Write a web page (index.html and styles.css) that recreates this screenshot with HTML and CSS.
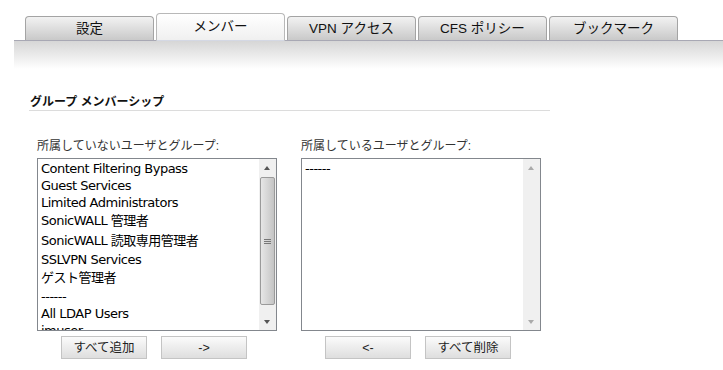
FILE: index.html
```html
<!DOCTYPE html>
<html lang="ja">
<head>
<meta charset="utf-8">
<link rel="stylesheet" href="styles.css">
</head>
<body>
<div class="tabs">
  <div class="tab">設定</div>
  <div class="tab active">メンバー</div>
  <div class="tab">VPN アクセス</div>
  <div class="tab">CFS ポリシー</div>
  <div class="tab">ブックマーク</div>
</div>
<div class="band"></div>
<div class="content">
  <h2 class="heading">グループ メンバーシップ</h2>
  <div class="columns">
    <div class="col">
      <div class="label">所属していないユーザとグループ:</div>
      <div class="list">
        <div class="items">
          <div class="opt">Content Filtering Bypass</div>
          <div class="opt">Guest Services</div>
          <div class="opt">Limited Administrators</div>
          <div class="opt cjk">SonicWALL 管理者</div>
          <div class="opt cjk">SonicWALL 読取専用管理者</div>
          <div class="opt">SSLVPN Services</div>
          <div class="opt cjk">ゲスト管理者</div>
          <div class="opt">------</div>
          <div class="opt">All LDAP Users</div>
          <div class="opt">imuser</div>
        </div>
        <div class="sb">
          <div class="arrow up"></div>
          <div class="track"><div class="thumb"><span class="grip"></span></div></div>
          <div class="arrow down"></div>
        </div>
      </div>
      <div class="btns">
        <button class="btn">すべて追加</button>
        <button class="btn">-&gt;</button>
      </div>
    </div>
    <div class="col">
      <div class="label">所属しているユーザとグループ:</div>
      <div class="list">
        <div class="items">
          <div class="opt">------</div>
        </div>
        <div class="sb disabled">
          <div class="arrow up"></div>
          <div class="track"></div>
          <div class="arrow down"></div>
        </div>
      </div>
      <div class="btns">
        <button class="btn">&lt;-</button>
        <button class="btn">すべて削除</button>
      </div>
    </div>
  </div>
</div>
</body>
</html>
```
FILE: styles.css
```css
body {
  margin: 0;
  background: #fff;
  font-family: "Liberation Sans", "Noto Sans CJK JP", sans-serif;
  color: #222;
}
.tabs {
  display: flex;
  align-items: flex-end;
  gap: 2px;
  margin-left: 14px;
  padding: 12px 0 0 11px;
  height: 28px;
  box-sizing: content-box;
}
.tab {
  width: 127px;
  height: 23px;
  border: 1px solid #a4a4a4;
  border-bottom: none;
  border-radius: 4px 4px 0 0;
  background: linear-gradient(#f2f2f2, #c9c9c9);
  font-size: 13.5px;
  line-height: 23px;
  text-align: center;
  color: #111;
}
.tab.active {
  line-height: 25px;
  background: linear-gradient(#ffffff, #f0f0f0);
  border-color: #b8b8b8;
  border-bottom: 1px solid #d4d8e4;
  box-sizing: border-box;
  width: 129px;
  height: 28px;
  margin-bottom: -1px;
  position: relative;
}
.band {
  margin-left: 14px;
  height: 28px;
  border-top: 1px solid #a8a8b4;
  background: linear-gradient(#d6d6d6, #ffffff);
}
.content {
  padding-left: 29px;
}
.heading {
  margin: 26px 0 0 0;
  width: 520px;
  font-size: 12px;
  font-weight: bold;
  line-height: 14px;
  padding: 0 0 1px 1px;
  border-bottom: 1px solid #dcdcdc;
  color: #111;
}
.columns {
  display: flex;
  gap: 24px;
  padding: 28px 0 0 8px;
}
.col {
  width: 240px;
  display: flex;
  flex-direction: column;
}
.label {
  font-size: 12px;
  line-height: 14px;
  color: #333;
  margin-bottom: 5px;
}
.list {
  display: flex;
  height: 173px;
  box-sizing: border-box;
  border: 1px solid #83878d;
  background: #fff;
  overflow: hidden;
}
.items {
  flex: 1;
  padding: 1px 0 0 3px;
  overflow: hidden;
}
.opt {
  font-family: "DejaVu Sans", "Noto Sans CJK JP", sans-serif;
  font-size: 13px;
  letter-spacing: -0.5px;
  line-height: 17px;
  height: 17px;
  color: #000;
  white-space: nowrap;
}
.opt.cjk {
  height: 20px;
  line-height: 20px;
}
.sb {
  width: 17px;
  display: flex;
  flex-direction: column;
  background: #f0f0f0;
  flex: none;
}
.arrow {
  height: 17px;
  position: relative;
}
.arrow::after {
  content: "";
  position: absolute;
  left: 5px;
  width: 0;
  height: 0;
  border-left: 3.5px solid transparent;
  border-right: 3.5px solid transparent;
}
.arrow.up::after {
  top: 7px;
  border-bottom: 4px solid #555;
}
.arrow.down::after {
  top: 7px;
  border-top: 4px solid #555;
}
.sb.disabled .arrow.up::after { border-bottom-color: #aaa; }
.sb.disabled .arrow.down::after { border-top-color: #aaa; }
.track {
  flex: 1;
  padding: 1px 0;
}
.thumb {
  height: 126px;
  margin: 0 1px;
  border: 1px solid #9a9a9a;
  border-radius: 2px;
  background: linear-gradient(90deg, #e6e6e6, #d2d2d2 60%, #c4c4c4);
  display: flex;
  align-items: center;
  justify-content: center;
}
.grip {
  width: 7px;
  height: 5px;
  background: repeating-linear-gradient(#777 0 1px, transparent 1px 2px);
}
.btns {
  display: flex;
  gap: 14px;
  padding-left: 24px;
  margin-top: 5px;
}
.btn {
  width: 86px;
  height: 23px;
  margin: 0;
  padding: 0;
  border: 1px solid #c4c4c4;
  background: linear-gradient(#fbfbfb, #dedede);
  font-family: "Liberation Sans", "Noto Sans CJK JP", sans-serif;
  font-size: 12.5px;
  line-height: 20px;
  color: #222;
}
```
